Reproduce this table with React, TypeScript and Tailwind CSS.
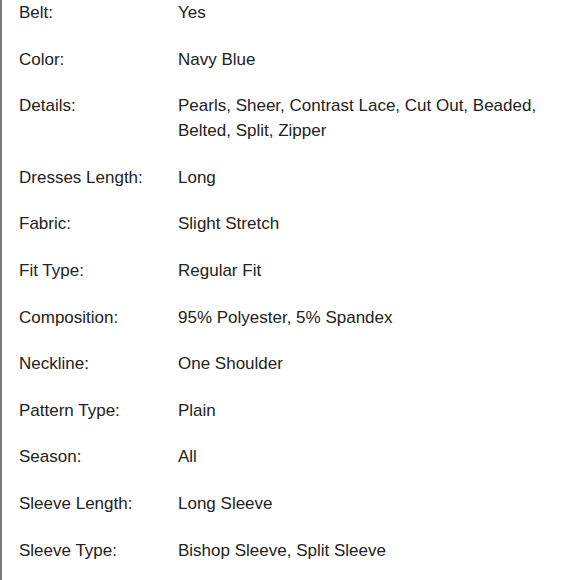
const specs: [string, string][] = [
  ['Belt:', 'Yes'],
  ['Color:', 'Navy Blue'],
  ['Details:', 'Pearls, Sheer, Contrast Lace, Cut Out, Beaded, Belted, Split, Zipper'],
  ['Dresses Length:', 'Long'],
  ['Fabric:', 'Slight Stretch'],
  ['Fit Type:', 'Regular Fit'],
  ['Composition:', '95% Polyester, 5% Spandex'],
  ['Neckline:', 'One Shoulder'],
  ['Pattern Type:', 'Plain'],
  ['Season:', 'All'],
  ['Sleeve Length:', 'Long Sleeve'],
  ['Sleeve Type:', 'Bishop Sleeve, Split Sleeve'],
];

export default function App() {
  return (
    <div className="w-[580px] h-[580px] bg-white overflow-hidden">
      <div className="h-full border-l-2 border-[#7a7a7a] pl-[17px] pr-[20px] font-['Liberation_Sans',Arial,sans-serif] text-[17px] leading-[25px] text-[#222]">
        <div className="flex flex-col gap-[21.6px]">
          {specs.map(([label, value]) => (
            <div key={label} className="flex">
              <div className="w-[159px] shrink-0">{label}</div>
              <div className="flex-1">{value}</div>
            </div>
          ))}
        </div>
      </div>
    </div>
  );
}
